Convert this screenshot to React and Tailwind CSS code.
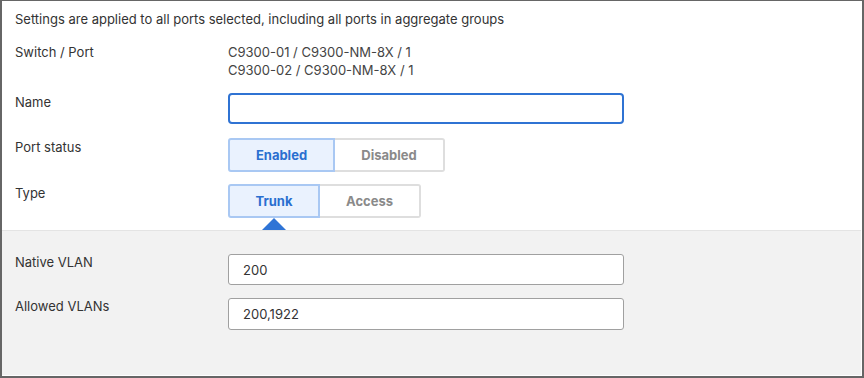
import React from "react";

const font = { fontFamily: "Inter, 'Noto Sans', sans-serif" };

function Seg({ items, widths, active }) {
  return (
    <div className="flex">
      {items.map((it, i) => {
        const on = i === active;
        return (
          <div
            key={it}
            className={
              "flex h-[34px] items-center justify-center text-[13px] font-bold " +
              (on
                ? "rounded-l-[3px] border-2 border-[#a9c8f3] bg-[#eaf2fe] text-[#2a6fd0]"
                : "rounded-r-[3px] border-2 border-l-0 border-[#dedede] bg-white text-[#8a8a8a]")
            }
            style={{ width: widths[i] }}
          >
            {it}
          </div>
        );
      })}
    </div>
  );
}

export default function App() {
  return (
    <div
      className="box-border flex h-[378px] w-[864px] flex-col border-b-2 border-l-2 border-r-2 border-t border-[#666666] bg-white text-[13px] leading-[18px] text-[#333333]"
      style={font}
    >
      <div className="flex flex-col pl-[13px] pt-[9px]">
        <div className="text-[#333]">
          Settings are applied to all ports selected, including all ports in aggregate groups
        </div>
        <div className="mt-[15px] flex">
          <div className="w-[213px]">Switch / Port</div>
          <div className="text-[#444]">
            <div>C9300-01 / C9300-NM-8X / 1</div>
            <div>C9300-02 / C9300-NM-8X / 1</div>
          </div>
        </div>
        <div className="mt-[14px] flex items-start">
          <div className="w-[213px]">Name</div>
          <div className="h-[31px] w-[396px] rounded-[4px] border-2 border-[#2f73d3] bg-white" />
        </div>
        <div className="mt-[14px] flex items-start">
          <div className="w-[213px]">Port status</div>
          <Seg items={["Enabled", "Disabled"]} widths={[107, 110]} active={0} />
        </div>
        <div className="mt-[12px] flex items-start">
          <div className="w-[213px]">Type</div>
          <div className="flex flex-col">
            <Seg items={["Trunk", "Access"]} widths={[92, 101]} active={0} />
            <div className="flex h-[12px] w-[92px] justify-center overflow-hidden">
              <svg width="26" height="13" viewBox="0 0 26 13">
                <polygon points="13,0 26,13 0,13" fill="#2f74d6" />
              </svg>
            </div>
          </div>
        </div>
      </div>
      <div className="mr-[1px] flex flex-1 flex-col border-t border-[#e4e4e4] bg-[#f2f2f2] pl-[13px] pt-[23px]">
        <div className="flex items-start">
          <div className="mt-[-1px] w-[213px]">Native VLAN</div>
          <div className="flex h-[31px] w-[396px] items-center rounded-[3px] border border-[#a0a0a0] bg-white pl-[14px] text-[#333]">
            200
          </div>
        </div>
        <div className="mt-[13px] flex items-start">
          <div className="mt-[-1px] w-[213px]">Allowed VLANs</div>
          <div className="flex h-[32px] w-[396px] items-center rounded-[3px] border border-[#a0a0a0] bg-white pl-[14px] text-[#333]">
            200,1922
          </div>
        </div>
      </div>
      <div className="h-[1px] bg-white" />
    </div>
  );
}
